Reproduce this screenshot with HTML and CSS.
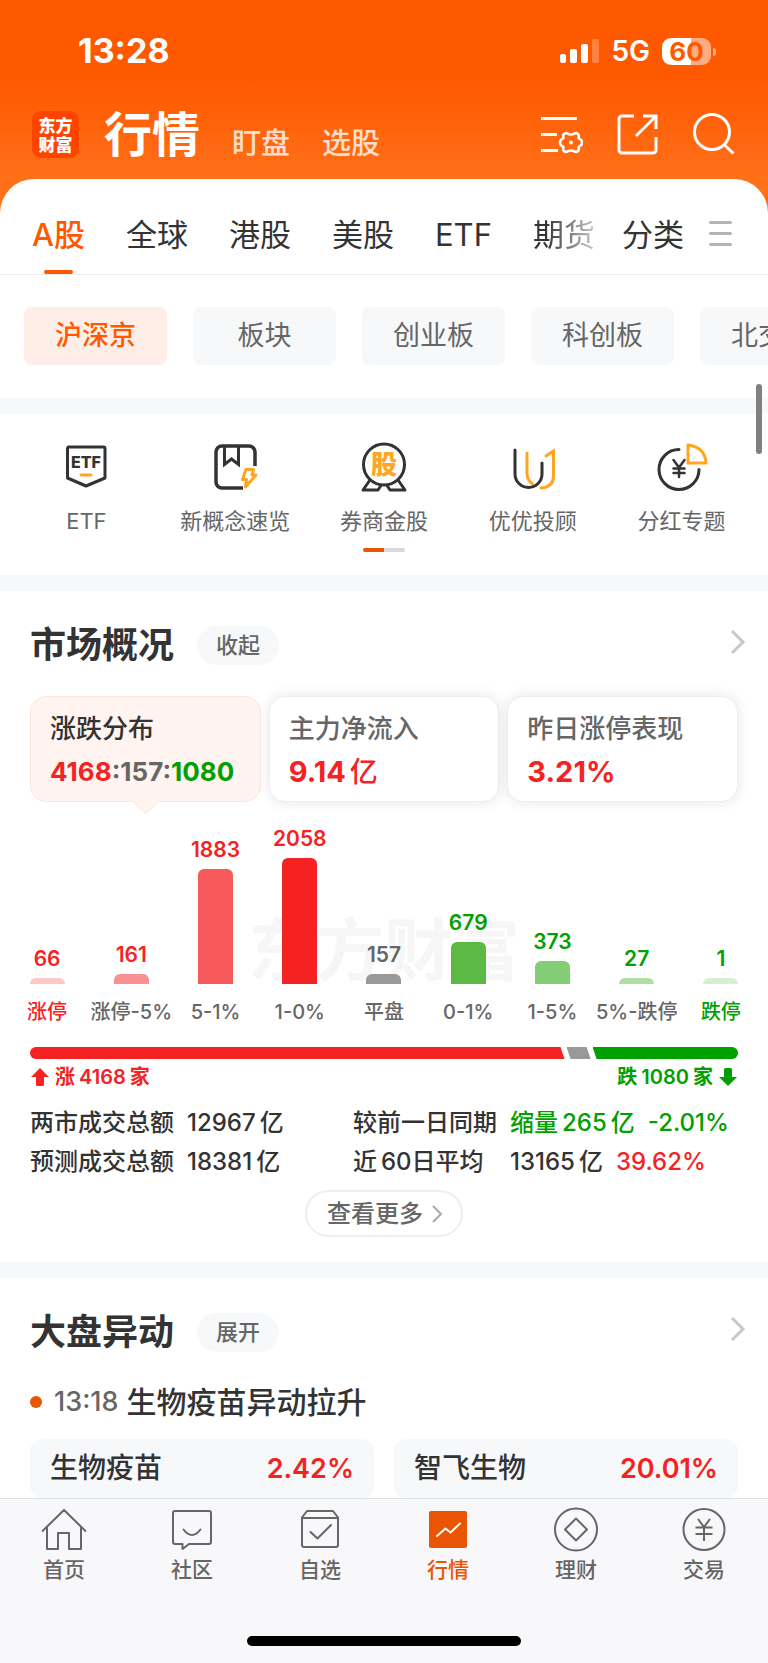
FILE: index.html
```html
<!DOCTYPE html>
<html lang="zh-CN">
<head>
    <meta charset="UTF-8">
    <meta name="viewport" content="width=device-width, initial-scale=1.0">
    <title>行情</title>
    <link rel="stylesheet" href="styles.css">
</head>
<body>

    <header class="top">
        <div class="status-bar">
            <span class="time">13:28</span>
            <div class="status-icons">
                <svg class="signal" width="39" height="24" viewBox="0 0 39 24" fill="#fff">
                    <rect x="0" y="15" width="6" height="9" rx="2"/>
                    <rect x="10" y="10" width="7" height="14" rx="2"/>
                    <rect x="21" y="5" width="7" height="19" rx="2"/>
                    <rect x="32" y="0" width="7" height="24" rx="2" opacity="0.25"/>
                </svg>
                <span class="network">5G</span>
                <span class="battery">60</span>
            </div>
        </div>

        <div class="title-bar">
            <div class="logo"><span>东方</span><span>财富</span></div>
            <nav class="main-nav">
                <a href="#" class="current">行情</a>
                <a href="#">盯盘</a>
                <a href="#">选股</a>
            </nav>
            <div class="actions">
                <button type="button" aria-label="设置">
                    <svg width="42" height="42" viewBox="0 0 42 42" fill="none" stroke="#fff" stroke-width="3">
                        <path d="M0 5.500h36M0 21.500h16M0 37.500h17"/>
                        <path stroke-width="2.600" stroke-linejoin="round" d="M30 21.500Q32 21.500 33.500 20.500Q36 19.500 37.500 21.500Q38 23 37.600 25.200Q39 26 40.200 27Q41.800 29.500 40.200 32Q39 33 37.600 33.800Q38 36 37.500 37.500Q36 39.500 33.500 38.500Q32 37.500 30 37.500Q28 37.500 26.500 38.500Q24 39.500 22.500 37.500Q22 36 22.400 33.800Q21 33 19.800 32Q18.200 29.500 19.800 27Q21 26 22.400 25.200Q22 23 22.500 21.500Q24 19.500 26.500 20.500Q28 21.500 30 21.500Z"/>
                        <circle cx="30" cy="29.500" r="2" fill="#fff" stroke="none"/>
                    </svg>
                </button>
                <button type="button" aria-label="分享">
                    <svg width="42" height="42" viewBox="0 0 42 42" fill="none" stroke="#fff" stroke-width="3" stroke-linejoin="round">
                        <path d="M17 3H5a3 3 0 0 0-3 3v31a3 3 0 0 0 3 3h31a3 3 0 0 0 3-3V24"/>
                        <path stroke-linejoin="miter" d="M26 3h13v13M39 3L19 23"/>
                    </svg>
                </button>
                <button type="button" aria-label="搜索">
                    <svg width="42" height="42" viewBox="0 0 42 42" fill="none" stroke="#fff" stroke-width="3">
                        <circle cx="19" cy="19" r="17.500"/>
                        <path d="M31 31.500L40.500 40.500"/>
                    </svg>
                </button>
            </div>
        </div>
    </header>

    <main class="sheet">
        <nav class="market-tabs">
            <div class="market-list">
                <a href="#" class="current">A股</a>
                <a href="#">全球</a>
                <a href="#">港股</a>
                <a href="#">美股</a>
                <a href="#">ETF</a>
                <a href="#" class="fade">期货</a>
            </div>
            <a href="#">分类</a>
            <button type="button" class="menu" aria-label="菜单"><i></i><i></i><i></i></button>
        </nav>

        <div class="chips">
            <button type="button" class="active">沪深京</button>
            <button type="button">板块</button>
            <button type="button">创业板</button>
            <button type="button">科创板</button>
            <button type="button">北交所</button>
        </div>

        <section class="shortcuts">
            <div class="shortcut-list">
                <a href="#">
                    <svg width="52" height="52" viewBox="0 0 52 52" fill="none" stroke="#333" stroke-width="3" stroke-linejoin="round">
                        <path d="M8.500 7h35a1.500 1.500 0 0 1 1.500 1.500V38L26 46 7.500 38V8.500A1.500 1.500 0 0 1 8.500 7z"/>
                        <text class="etf-mark" x="26" y="28" text-anchor="middle">ETF</text>
                        <path d="M21 35h10" stroke="#ffa51f" stroke-linecap="round"/>
                    </svg>
                    <span>ETF</span>
                </a>
                <a href="#">
                    <svg width="52" height="52" viewBox="0 0 52 52" fill="none" stroke="#333" stroke-width="3.500">
                        <path d="M46 26V12a6 6 0 0 0-6-6H13a6 6 0 0 0-6 6v30a6 6 0 0 0 6 6h21"/>
                        <path stroke-width="3" d="M15.500 6v18.500l7-5.500 7 5.500V6"/>
                        <path stroke="#ffa51f" stroke-width="3" stroke-linejoin="round" d="M37 29.500h7.500l-1.500 5.500h4L36.500 47l1-7.500h-4z"/>
                    </svg>
                    <span>新概念速览</span>
                </a>
                <a href="#">
                    <svg width="52" height="52" viewBox="0 0 52 52" fill="none" stroke="#333" stroke-width="3" stroke-linejoin="round">
                        <path d="M12 40L5 50h15l4-6M40 40l7 10H32l-4-6"/>
                        <circle cx="26" cy="24.500" r="20.500" fill="#fff"/>
                        <text class="stock-mark" x="26" y="34" text-anchor="middle">股</text>
                    </svg>
                    <span>券商金股</span>
                </a>
                <a href="#">
                    <svg width="52" height="52" viewBox="0 0 52 52" fill="none" stroke="#333" stroke-width="3" stroke-linecap="round">
                        <path stroke="#ffa51f" d="M20 13v20q0 7 5.500 11M39 16l7.500-5v25q0 11-12.500 12"/>
                        <path d="M8 10v24a13.500 13.500 0 0 0 27 0V23"/>
                    </svg>
                    <span>优优投顾</span>
                </a>
                <a href="#">
                    <svg width="52" height="52" viewBox="0 0 52 52" fill="none" stroke="#333" stroke-width="3" stroke-linecap="round" stroke-linejoin="round">
                        <path d="M23 9.500A20 20 0 1 0 43 29.500"/>
                        <path d="M17.500 20l5.500 7.500 5.500-7.500M23 28v9M17.500 28.500h11M17.500 33h11" stroke-width="2.500"/>
                        <path stroke="#ffa51f" d="M32 5v18h18Q49 7 32 5z"/>
                    </svg>
                    <span>分红专题</span>
                </a>
            </div>
            <div class="pager"><i></i></div>
        </section>

        <section class="panel overview">
            <div class="panel-head">
                <h2>市场概况</h2>
                <button type="button" class="pill">收起</button>
                <a href="#" class="more" aria-label="更多">
                    <svg width="16" height="26" viewBox="0 0 16 26" fill="none" stroke="#c8c8c8" stroke-width="3"><path d="M2 2l11 11L2 24"/></svg>
                </a>
            </div>

            <div class="cards">
                <button type="button" class="card selected">
                    <span class="card-name">涨跌分布</span>
                    <span class="card-ratio"><b class="up">4168</b>:157:<b class="down">1080</b></span>
                </button>
                <button type="button" class="card">
                    <span class="card-name">主力净流入</span>
                    <span class="card-value up">9.14<small>亿</small></span>
                </button>
                <button type="button" class="card">
                    <span class="card-name">昨日涨停表现</span>
                    <span class="card-value up">3.21%</span>
                </button>
            </div>

            <div class="chart">
                <span class="watermark">东方财富</span>
                <div class="col up"><b>66</b><i class="r1" style="height: 6px"></i><span>涨停</span></div>
                <div class="col up mid"><b>161</b><i class="r2" style="height: 10px"></i><span>涨停-5%</span></div>
                <div class="col up mid"><b>1883</b><i class="r3" style="height: 115px"></i><span>5-1%</span></div>
                <div class="col up mid"><b>2058</b><i class="r4" style="height: 126px"></i><span>1-0%</span></div>
                <div class="col mid"><b>157</b><i class="flat" style="height: 10px"></i><span>平盘</span></div>
                <div class="col down mid"><b>679</b><i class="g4" style="height: 42px"></i><span>0-1%</span></div>
                <div class="col down mid"><b>373</b><i class="g3" style="height: 23px"></i><span>1-5%</span></div>
                <div class="col down mid"><b>27</b><i class="g2" style="height: 6px"></i><span>5%-跌停</span></div>
                <div class="col down"><b>1</b><i class="g1" style="height: 6px"></i><span>跌停</span></div>
            </div>

            <div class="ratio">
                <i class="ratio-up" style="width: 75.5%"></i>
                <i class="ratio-flat" style="width: 3.4%"></i>
                <i class="ratio-down"></i>
            </div>
            <div class="ratio-text">
                <span class="up">
                    <svg width="18" height="18" viewBox="0 0 18 18" fill="currentColor"><path d="M9 0l9 9h-5v7.500q0 1.500-1.500 1.500h-5Q5 18 5 16.500V9H0z"/></svg>
                    <span>涨<small>4168</small><small>家</small></span>
                </span>
                <span class="down">
                    <span>跌<small>1080</small><small>家</small></span>
                    <svg width="18" height="18" viewBox="0 0 18 18" fill="currentColor"><path d="M9 18l9-9h-5V1.500Q13 0 11.500 0h-5Q5 0 5 1.500V9H0z"/></svg>
                </span>
            </div>

            <div class="stats">
                <div class="stat"><span class="stat-name">两市成交总额</span><span>12967<small>亿</small></span></div>
                <div class="stat"><span class="stat-name">较前一日同期</span><span class="down">缩量<small>265</small><small>亿</small></span><span class="down">-2.01%</span></div>
                <div class="stat"><span class="stat-name">预测成交总额</span><span>18381<small>亿</small></span></div>
                <div class="stat"><span class="stat-name">近<small>60</small>日平均</span><span>13165<small>亿</small></span><span class="up">39.62%</span></div>
            </div>

            <button type="button" class="view-more">
                查看更多
                <svg width="12" height="18" viewBox="0 0 12 18" fill="none" stroke="#aaa" stroke-width="2"><path d="M2 1l8 8-8 8"/></svg>
            </button>
        </section>

        <section class="panel moves">
            <div class="panel-head">
                <h2>大盘异动</h2>
                <button type="button" class="pill">展开</button>
                <a href="#" class="more" aria-label="更多">
                    <svg width="16" height="26" viewBox="0 0 16 26" fill="none" stroke="#c8c8c8" stroke-width="3"><path d="M2 2l11 11L2 24"/></svg>
                </a>
            </div>
            <div class="news">
                <i></i>
                <time>13:18</time>
                <h3>生物疫苗异动拉升</h3>
            </div>
            <div class="stocks">
                <a href="#">生物疫苗<b>2.42%</b></a>
                <a href="#">智飞生物<b>20.01%</b></a>
            </div>
        </section>

        <div class="scroll-thumb"></div>
    </main>

    <footer class="tab-bar">
        <nav>
            <a href="#">
                <svg width="46" height="46" viewBox="0 0 46 46" fill="none" stroke="#666" stroke-width="2" stroke-linejoin="round">
                    <path d="M1 25.500L23 4l22 21.500M6 21v22h11V27h11v16h12V21"/>
                </svg>
                <span>首页</span>
            </a>
            <a href="#">
                <svg width="46" height="46" viewBox="0 0 46 46" fill="none" stroke="#666" stroke-width="2" stroke-linejoin="round">
                    <path d="M6 5h34a2 2 0 0 1 2 2v29a2 2 0 0 1-2 2H20l-6.500 5v-5H6a2 2 0 0 1-2-2V7a2 2 0 0 1 2-2z"/>
                    <path d="M14.500 23.500q8.500 11 17 0" stroke-linecap="round"/>
                </svg>
                <span>社区</span>
            </a>
            <a href="#">
                <svg width="46" height="46" viewBox="0 0 46 46" fill="none" stroke="#666" stroke-width="2" stroke-linejoin="round">
                    <path d="M5 11.500l5-6.500h26l5 6.500V39a2 2 0 0 1-2 2H7a2 2 0 0 1-2-2zM5 12h36"/>
                    <path d="M13.500 26l7 6.500L34 19" stroke-linecap="round"/>
                </svg>
                <span>自选</span>
            </a>
            <a href="#" class="current">
                <svg width="46" height="46" viewBox="0 0 46 46" fill="none">
                    <rect x="4" y="5" width="38" height="37" rx="2" fill="#ea5504"/>
                    <path d="M12 30l8.500-7.500 5 4L35 17.500" stroke="#fff" stroke-width="2" stroke-linecap="round" stroke-linejoin="round"/>
                </svg>
                <span>行情</span>
            </a>
            <a href="#">
                <svg width="46" height="46" viewBox="0 0 46 46" fill="none" stroke="#666" stroke-width="2" stroke-linejoin="round">
                    <circle cx="23" cy="23.500" r="21"/>
                    <path d="M23 12.500l11 11-11 11-11-11z"/>
                </svg>
                <span>理财</span>
            </a>
            <a href="#">
                <svg width="46" height="46" viewBox="0 0 46 46" fill="none" stroke="#666" stroke-width="2">
                    <circle cx="23" cy="23.500" r="20.500"/>
                    <path d="M17 13l6 8 6-8M23 21v14M14.500 21.500h17M14.500 28h17"/>
                </svg>
                <span>交易</span>
            </a>
        </nav>
        <div class="home-indicator"></div>
    </footer>

</body>
</html>
```

FILE: styles.css
```css
/* General reset */
* {
    margin: 0;
    padding: 0;
    box-sizing: border-box;
}

body {
    font-family: 'Inter', 'Noto Sans CJK SC', sans-serif;
    font-weight: 500;
    color: #333;
    background: linear-gradient(#ff5900 80px, #ff7019 180px);
    min-height: 100vh;
    display: flex;
    flex-direction: column;
    overflow-x: hidden;
}

a {
    color: inherit;
    text-decoration: none;
}

button {
    font: inherit;
    line-height: 32px;
    color: inherit;
    background: none;
    border: none;
    cursor: pointer;
}

svg {
    display: block;
}

.up {
    color: #f52222;
}

.down {
    color: #00a000;
}

/* Status bar */
.status-bar {
    display: flex;
    justify-content: space-between;
    align-items: center;
    padding: 31px 52px 0 78px;
    color: #fff;
}

.time {
    font-size: 34px;
    line-height: 40px;
    font-weight: 700;
}

.status-icons {
    display: flex;
    align-items: center;
    gap: 12px;
}

.network {
    font-size: 28px;
    line-height: 32px;
    font-weight: 600;
}

.battery {
    position: relative;
    width: 49px;
    height: 27px;
    margin-right: 5px;
    border-radius: 9px;
    background: linear-gradient(to right, #fff 60%, rgba(255, 255, 255, 0.5) 60%);
    color: #ff5900;
    font-size: 26px;
    line-height: 27px;
    font-weight: 700;
    text-align: center;
}

.battery::after {
    content: "";
    position: absolute;
    left: 51px;
    top: 10px;
    width: 3px;
    height: 8px;
    border-radius: 0 3px 3px 0;
    background: rgba(255, 255, 255, 0.5);
}

/* Title bar */
.title-bar {
    display: flex;
    align-items: center;
    height: 108px;
    padding: 18px 33px 0 32px;
    color: #fff;
}

.logo {
    display: flex;
    flex-direction: column;
    justify-content: center;
    width: 47px;
    height: 47px;
    margin-right: 25px;
    border-radius: 9px;
    background: #ff4400;
    font-family: 'Noto Sans CJK SC', sans-serif;
    font-size: 17px;
    line-height: 19px;
    font-weight: 900;
    text-align: center;
}

.main-nav {
    display: flex;
    align-items: flex-end;
    gap: 32px;
    padding-top: 2px;
    font-size: 29px;
    line-height: 42px;
    color: rgba(255, 255, 255, 0.8);
}

.main-nav .current {
    font-size: 48px;
    line-height: 60px;
    font-weight: 700;
    color: #fff;
}

.actions {
    display: flex;
    gap: 34px;
    margin-left: auto;
}

/* White sheet */
.sheet {
    position: relative;
    background: #fff;
    border-radius: 34px 34px 0 0;
}

.market-tabs {
    display: flex;
    gap: 25px;
    height: 96px;
    padding: 0 36px 0 32px;
    border-bottom: 1px solid #eee;
    font-size: 31px;
    line-height: 112px;
    font-weight: 400;
    white-space: nowrap;
}

.market-list {
    flex: 1;
    min-width: 0;
    display: flex;
    gap: 41px;
    overflow: hidden;
}

.market-tabs .current {
    position: relative;
    color: #ff5900;
    font-weight: 500;
}

.market-tabs .current::after {
    content: "";
    position: absolute;
    left: 12px;
    right: 12px;
    top: 91px;
    height: 4px;
    border-radius: 2px;
    background: #ff5900;
}

.market-tabs .fade {
    background: linear-gradient(to right, #333 20%, #ccc);
    -webkit-background-clip: text;
    background-clip: text;
    color: transparent;
}

.menu {
    display: flex;
    flex-direction: column;
    justify-content: center;
    gap: 8px;
    padding-top: 14px;
}

.menu i {
    width: 23px;
    height: 3px;
    border-radius: 2px;
    background: #b4b4b4;
}

/* Board chips */
.chips {
    display: flex;
    gap: 26px;
    padding: 32px 0 33px 24px;
    overflow: hidden;
}

.chips button {
    flex: 0 0 143px;
    height: 58px;
    border-radius: 8px;
    background: #f7f8fa;
    color: #666;
    font-size: 27px;
    font-weight: 400;
}

.chips .active {
    background: #ffeee7;
    color: #ff5900;
    font-weight: 500;
}

/* Shortcuts */
.shortcuts {
    border-top: 16px solid #f6f8fa;
    padding: 26px 12px 23px;
}

.shortcut-list {
    display: grid;
    grid-template-columns: repeat(5, 1fr);
}

.shortcut-list a {
    display: flex;
    flex-direction: column;
    align-items: center;
    gap: 14px;
    font-size: 22px;
    line-height: 30px;
    font-weight: 400;
    color: #666;
}

.etf-mark {
    font-size: 16px;
    font-weight: 800;
    fill: #333;
    stroke: none;
}

.stock-mark {
    font-size: 26px;
    font-weight: 900;
    fill: #ffa51f;
    stroke: none;
}

.pager {
    width: 42px;
    height: 4px;
    margin: 12px auto 0;
    border-radius: 2px;
    background: #d8d9e0;
    overflow: hidden;
}

.pager i {
    display: block;
    width: 50%;
    height: 100%;
    background: #ea5504;
}

/* Panels */
.panel {
    border-top: 16px solid #f6f8fa;
    padding: 30px 30px 0;
}

.panel-head {
    display: flex;
    align-items: center;
    height: 48px;
}

.panel-head h2 {
    font-size: 36px;
    line-height: 48px;
    font-weight: 700;
}

.pill {
    width: 82px;
    height: 39px;
    margin-left: 23px;
    border-radius: 20px;
    background: #f6f8fa;
    color: #666;
    font-size: 22px;
}

.more {
    margin-left: auto;
    margin-right: -8px;
    padding-bottom: 6px;
}

/* Summary cards */
.cards {
    display: grid;
    grid-template-columns: repeat(3, 1fr);
    gap: 8px;
    margin-top: 27px;
}

.card {
    position: relative;
    display: flex;
    flex-direction: column;
    gap: 8px;
    height: 106px;
    padding: 14px 19px;
    border: 1px solid #eee;
    border-radius: 16px;
    background: #fff;
    box-shadow: 0 0 14px rgba(0, 0, 0, 0.1);
    text-align: left;
}

.card.selected {
    border-color: #ffe6da;
    background: #fff4ef;
    box-shadow: none;
}

/* pointer under the selected card */
.card.selected::after {
    content: "";
    position: absolute;
    left: 50%;
    bottom: -10px;
    width: 18px;
    height: 18px;
    margin-left: -9px;
    border: 1px solid #ffe6da;
    border-width: 0 1px 1px 0;
    border-radius: 0 0 3px 0;
    background: #fff4ef;
    transform: rotate(45deg);
}

.card-name {
    font-size: 26px;
    line-height: 36px;
    color: #666;
}

.selected .card-name {
    color: #333;
}

.card-ratio {
    font-size: 26px;
    line-height: 34px;
    font-weight: 700;
    color: #666;
}

.card-ratio b {
    font-weight: 700;
}

.card-value {
    font-size: 29px;
    line-height: 34px;
    font-weight: 700;
}

small {
    margin-left: 4px;
    font-size: inherit;
}

.card-value small {
    font-size: 28px;
    font-weight: 500;
}

/* Distribution chart */
.chart {
    position: relative;
    display: grid;
    grid-template-columns: repeat(9, 1fr);
    align-items: end;
    height: 223px;
    margin: 0 -25px;
}

.watermark {
    position: absolute;
    left: 0;
    right: 0;
    bottom: 35px;
    font-size: 68px;
    line-height: 80px;
    font-weight: 700;
    color: #f6f6f6;
    text-align: center;
}

.col {
    position: relative;
    display: flex;
    flex-direction: column;
    align-items: center;
    font-size: 20px;
    line-height: 26px;
    color: #666;
    white-space: nowrap;
}

.col.up {
    color: #f52222;
}

.col.down {
    color: #00a000;
}

.col b {
    font-size: 21px;
    font-weight: 600;
}

.col i {
    width: 35px;
    margin: 6px 0 15px;
    border-radius: 6px 6px 0 0;
}

.col.mid span {
    color: #666;
}

.r1 { background: #fcc8c8; }
.r2 { background: #f99193; }
.r3 { background: #f85a5c; }
.r4 { background: #f52222; }
.flat { background: #999; }
.g4 { background: #5bb944; }
.g3 { background: #84cd74; }
.g2 { background: #addea3; }
.g1 { background: #d6efd1; }

/* Up / flat / down ratio */
.ratio {
    display: flex;
    gap: 2px;
    height: 12px;
    margin-top: 22px;
    border-radius: 6px;
    overflow: hidden;
}

.ratio-up {
    background: #f52222;
    clip-path: polygon(0 0, calc(100% - 4px) 0, 100% 100%, 0 100%);
}

.ratio-flat {
    background: #999;
    clip-path: polygon(0 0, calc(100% - 4px) 0, 100% 100%, 4px 100%);
}

.ratio-down {
    flex: 1;
    background: #00a000;
    clip-path: polygon(0 0, 100% 0, 100% 100%, 4px 100%);
}

.ratio-text {
    display: flex;
    justify-content: space-between;
    margin-top: 5px;
    padding: 0 1px;
    font-size: 20px;
    line-height: 26px;
    font-weight: 600;
}

.ratio-text > span {
    display: flex;
    align-items: center;
    gap: 6px;
}

/* Turnover stats */
.stats {
    display: grid;
    grid-template-columns: 323px 1fr;
    margin-top: 13px;
    font-size: 24px;
    line-height: 39px;
}

.stat {
    display: flex;
    gap: 13px;
    white-space: nowrap;
}

.stat-name {
    width: 144px;
}

.view-more {
    display: flex;
    align-items: center;
    gap: 8px;
    height: 47px;
    margin: 9px auto 25px;
    padding: 0 18px 0 20px;
    border: 2px solid #eee;
    border-radius: 24px;
    color: #666;
    font-size: 24px;
}

/* Market moves */
.news {
    display: flex;
    align-items: center;
    margin-top: 26px;
    line-height: 40px;
}

.news i {
    width: 12px;
    height: 12px;
    margin-right: 12px;
    border-radius: 50%;
    background: #ea5504;
}

.news time {
    margin-right: 8px;
    font-size: 27px;
    color: #666;
}

.news h3 {
    font-size: 30px;
    font-weight: 500;
}

.stocks {
    display: grid;
    grid-template-columns: 1fr 1fr;
    gap: 20px;
    margin-top: 17px;
}

.stocks a {
    display: flex;
    justify-content: space-between;
    padding: 0 20px;
    border-radius: 12px;
    background: #f6f8fa;
    font-size: 28px;
    line-height: 59px;
}

.stocks b {
    font-size: 27px;
    font-weight: 600;
    color: #f52222;
}

.scroll-thumb {
    position: absolute;
    right: 6px;
    top: 205px;
    width: 6px;
    height: 70px;
    border-radius: 3px;
    background: #808080;
}

/* Bottom tab bar */
.tab-bar {
    flex: 1;
    display: flex;
    flex-direction: column;
    justify-content: space-between;
    border-top: 1px solid #dfe2e6;
    background: #f8f8fb;
}

.tab-bar nav {
    display: grid;
    grid-template-columns: repeat(6, 1fr);
    padding-top: 7px;
}

.tab-bar a {
    display: flex;
    flex-direction: column;
    align-items: center;
    gap: 4px;
    font-size: 21px;
    line-height: 28px;
    color: #666;
}

.tab-bar .current {
    color: #ea5504;
}

.home-indicator {
    width: 274px;
    height: 10px;
    margin: 0 auto 17px;
    border-radius: 5px;
    background: #000;
}
```
